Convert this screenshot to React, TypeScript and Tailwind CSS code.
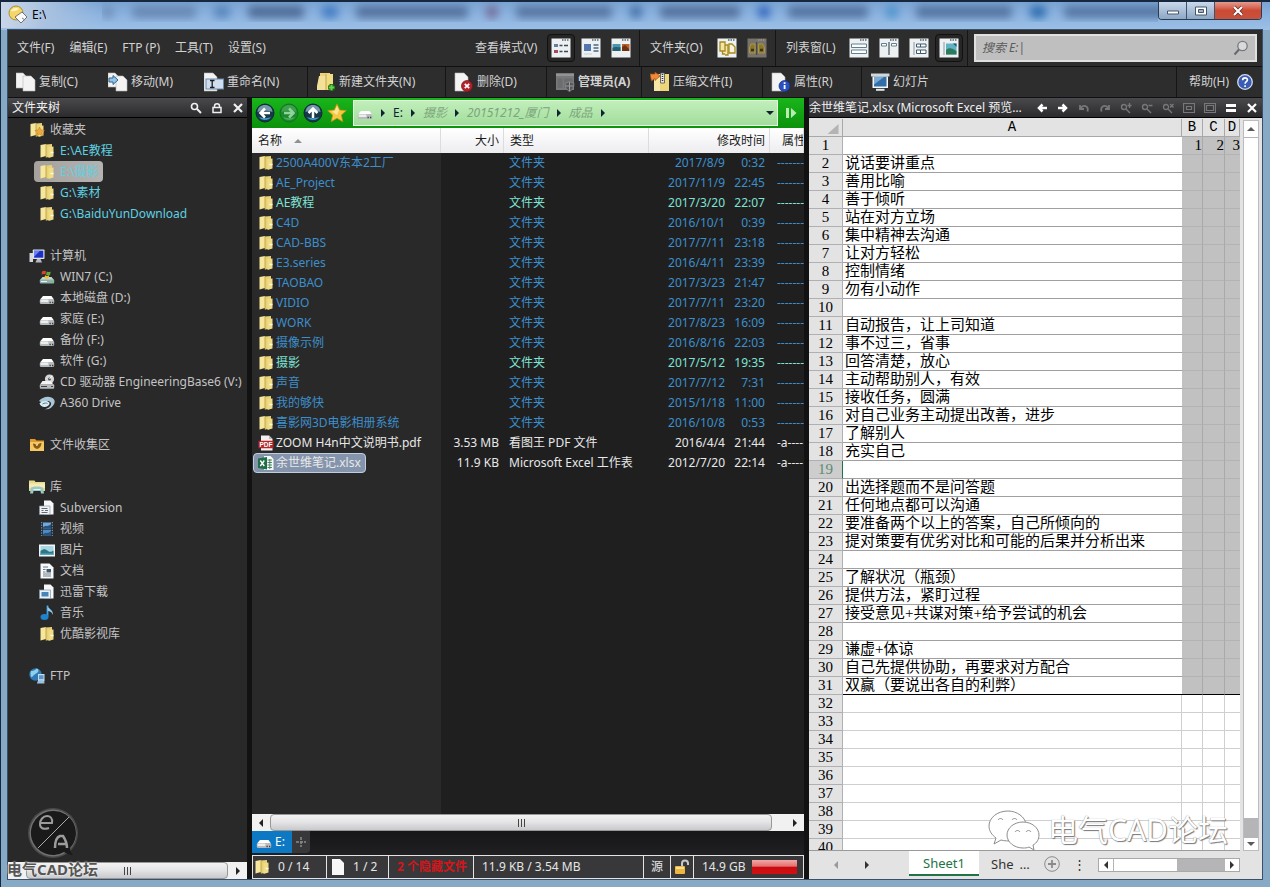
import React from "react";
import type { ReactNode } from "react";

const UI_FONT = "font-['Noto_Sans','Noto_Sans_CJK_SC',sans-serif]";

/* ---------- icons ---------- */

type SvgProps = { children: ReactNode; box?: string; className?: string };
const Svg = ({ children, box = "0 0 16 16", className = "size-4" }: SvgProps) => (
  <svg viewBox={box} className={`${className} shrink-0`} aria-hidden="true" fill="none">
    {children}
  </svg>
);

const Page = ({ x = 0, y = 0, w = 10, h = 14 }: { x?: number; y?: number; w?: number; h?: number }) => (
  <path d={`M${x} ${y}h${w - 4}l4 4v${h - 4}h${-w}z`} fill="#f3f3f3" stroke="#b9b9b9" strokeWidth="0.6" />
);

const FolderShape = () => (
  <>
    <path d="M1.500 2 7 1v12l-5.500 1.500z" fill="#f6e79c" />
    <path d="M7 1.500 13 1v12.500L7 14.500z" fill="#e8d277" />
    <path d="M9.500 4 14.500 3.500v10L9.500 15z" fill="#f0dc85" />
    <path d="M7 1v13.500" stroke="#b89a42" strokeWidth="0.8" />
    <path d="M11.500 9.500h3" stroke="#fffbe0" strokeWidth="1.500" />
  </>
);

const FolderIcon = () => (
  <Svg>
    <FolderShape />
  </Svg>
);

const FavIcon = () => (
  <Svg>
    <FolderShape />
    <path d="m10.500 5 1.500 3 3.500.400-2.600 2.200.800 3.400-3.200-1.900L7.400 14l.800-3.400L6 8.400 9.200 8z" fill="#f2a93b" stroke="#b87518" strokeWidth="0.500" />
  </Svg>
);

const DriveIcon = ({ className = "size-4" }: { className?: string }) => (
  <Svg className={className}>
    <path d="M4 6h8.500L15 9.500H1z" fill="#ffffff" />
    <rect x="0.800" y="9" width="14.400" height="5" rx="1.500" fill="#b9bcbe" />
    <rect x="1.500" y="9.500" width="8" height="2.500" rx="1" fill="#eceeee" />
    <path d="M10.500 12.500h1.300M13 12.500h1.300" stroke="#3a3f42" strokeWidth="1.400" />
  </Svg>
);

const WinDriveIcon = () => (
  <Svg>
    <path d="M3.500 8h9l2.500 3H1z" fill="#c8d6d4" />
    <rect x="0.800" y="10.500" width="14.400" height="4" rx="1" fill="#8fb0ac" />
    <path d="M2 12.500h6" stroke="#e8f3f0" />
    <path d="M3 2.500c1.500-1 2.500-1 4-.200L6.500 5.500C5 4.800 4 5 2.500 5.600z" fill="#d8452b" />
    <path d="M7.800 2.500c1.500.800 2.700.800 4 0L11 6c-1.500.700-2.500.500-4-.200z" fill="#63a83a" />
    <path d="M6 6.300c1.500.800 2.700.800 4.300 0l-.700 3c-1.500.700-2.600.600-4.200-.200z" fill="#efc02d" />
    <path d="M12.500 13h1.500" stroke="#4cd94a" strokeWidth="1.400" />
  </Svg>
);

const CdIcon = () => (
  <Svg>
    <circle cx="10.500" cy="5" r="4.600" fill="#d4d6d8" />
    <circle cx="10.500" cy="5" r="1.500" fill="#55595c" />
    <path d="m10.500 5 3-3.300" stroke="#ffffff" />
    <path d="M3.500 7h8l3 3.500H1z" fill="#f4f4f4" />
    <rect x="0.800" y="10.300" width="14.400" height="4.500" rx="1" fill="#b8babc" />
    <path d="M2 12.500h6M12 12.500h2" stroke="#3d4144" strokeWidth="1.200" />
  </Svg>
);

const A360Icon = () => (
  <Svg>
    <path d="M0 6C3 1.500 12 0 15 4.500c2 3-.500 7-5 9.500l-5 .500c5-1 8.500-5 6.500-7.300-1.800-2-6.500-1.200-7.500 1z" fill="#a9c6d6" />
    <path d="M.500 8.500c3-3 7.500-3 9.500-1.300 1.500 1.600-.500 3.800-3 4.500C4 12.500 1.500 11 .500 8.500z" fill="#dcecf3" />
    <path d="M3.500 9c2-1.200 4-1.200 5-.400" stroke="#4f7c94" />
  </Svg>
);

const ComputerIcon = () => (
  <Svg>
    <rect x="0.500" y="5" width="3.500" height="9" fill="#d5d8dc" />
    <rect x="3.800" y="1.500" width="11.700" height="9.500" rx="0.800" fill="#dfe3ea" />
    <rect x="5" y="2.700" width="9.300" height="7" fill="#1d2fc4" />
    <path d="m5 2.700 6 0L5 9z" fill="#6c82f0" />
    <path d="M8 11h3.500l1.500 3.500H6.500z" fill="#b5bac2" />
  </Svg>
);

const CollectIcon = () => (
  <Svg>
    <path d="M1 2h5l1.500 1.500H15V14H1z" fill="#e29b2f" />
    <path d="M1 5h14v9H1z" fill="#f6c765" />
    <path d="M4 6.500c2 0 3.500 1 4 2.500.500-1.500 2-3 4.500-3-.300 3-1.500 5.500-4.500 6C5.500 11.500 4 9.500 4 6.500z" fill="#8a5a12" />
    <path d="m7.500 9 1-1.500" stroke="#fff" strokeWidth="0.800" />
  </Svg>
);

const LibraryIcon = () => (
  <Svg>
    <path d="M0 1.500h5.500l1 1.500H16V12H0z" fill="#e7da8c" />
    <path d="M0 4.500h16V9H0z" fill="#f4ecb2" />
    <path d="M2 8.500c2-1.500 10-1.500 12 0l1 6h-3l-.500-2.500h-7L4 14.500H1z" fill="#9cc9c6" />
    <path d="M4.500 10.500h7" stroke="#e6f7f5" />
  </Svg>
);

const SubversionIcon = () => (
  <Svg>
    <path d="M5 .500h6.500l3 3v11H5z" fill="#f6f8fa" />
    <path d="M.500 6H11v8.500H.500z" fill="#f0f3f5" stroke="#8d9aa3" strokeWidth="0.700" />
    <path d="M2.500 8.500h6M2.500 10.500h2M6 10.500h3M2.500 12.500h6" stroke="#5d6c76" />
  </Svg>
);

const VideoIcon = () => (
  <Svg>
    <rect x="1.500" y="1" width="13" height="14" fill="#222c36" />
    <rect x="4" y="1.500" width="8" height="6" fill="#72a9d8" />
    <rect x="4" y="8.700" width="8" height="5.800" fill="#4a8cc7" />
    <path d="M4 6c3-2 5 0 8-3v4.500H4zM4 13c3-2 5 0 8-3v4.500H4z" fill="#28527c" />
    <path d="M2.700 1v14M13.300 1v14" stroke="#8fa2b2" strokeDasharray="1.300 1.300" />
  </Svg>
);

const ImageIcon = () => (
  <Svg>
    <rect x="0" y="2.500" width="16" height="12" fill="#f2f5f6" />
    <rect x="1.500" y="4" width="13" height="9" fill="#a8d6e4" />
    <path d="M1.500 9c3-2.500 5-2 7.500 0s4.500 0 5.500-.500V13h-13z" fill="#2c7687" />
    <path d="M1.500 11.500h13V13h-13z" fill="#5fa7bb" />
  </Svg>
);

const DocIcon = () => (
  <Svg>
    <path d="M1.500.500h9l4 4v11h-13z" fill="#f7f9fa" />
    <path d="M4 4h5M4 6.500h2.500M4 9h2.500M4 11h8M4 13h8" stroke="#6c7a84" />
    <rect x="7.500" y="6" width="4.500" height="3.500" fill="#3d5c6e" />
  </Svg>
);

const DownloadIcon = () => (
  <Svg>
    <path d="M5 .500h6.500l3 3v11H5z" fill="#f6f8fa" />
    <rect x="0.500" y="6" width="11" height="8.500" fill="#e8f1f8" stroke="#7f95a4" strokeWidth="0.700" />
    <rect x="2.500" y="8" width="7" height="4.500" fill="#4785b8" />
  </Svg>
);

const MusicIcon = () => (
  <Svg>
    <path d="M8.500.500v11" stroke="#3fa0e0" strokeWidth="1.800" />
    <path d="M8.500.500c.500 3.500 6 4 5.500 9.500-1-2.500-3-4-5.500-4.300z" fill="#8accf2" />
    <ellipse cx="5.500" cy="12" rx="4" ry="3" fill="#1f82cc" />
  </Svg>
);

const FtpIcon = () => (
  <Svg>
    <circle cx="6.500" cy="6.500" r="6.200" fill="#2f79b5" />
    <path d="M2 3c2 .500 4.500-1 5.500-2.500 3 .500 2 3.500.500 4.500S4 7.500 3 9 1 5 2 3z" fill="#8fd0e8" />
    <path d="M9 6h6.500v7.500H9z" fill="#c6dcef" />
    <path d="M10 7.200h4.500v4H10z" fill="#5a94cc" />
    <path d="M8 15.500c0-2 1.500-3.500 4-3.500s3.500 1.500 3.500 3.500z" fill="#9fc0dc" />
  </Svg>
);

const PdfIcon = () => (
  <Svg>
    <path d="M3 .500h8L14.500 4v11.500H3z" fill="#f4f0f0" />
    <path d="M11 .500V4h3.500z" fill="#bdb5b5" />
    <rect x="0.500" y="5.800" width="15" height="7.400" rx="0.500" fill="#b5262b" />
    <text x="8" y="12" textAnchor="middle" fontSize="6.500" fontWeight="700" fill="#fff" fontFamily="Liberation Sans, sans-serif">PDF</text>
  </Svg>
);

const XlsIcon = () => (
  <Svg>
    <path d="M6 1h6.500L15.500 4v11H6z" fill="#f5f8f6" />
    <path d="M9.500 5h4.500M9.500 7.500h4.500M9.500 10h4.500M9.500 12.500h4.500M11.800 4v10" stroke="#3c7a5a" strokeWidth="0.900" />
    <path d="M0 3.500 9 2v12.500L0 13z" fill="#1f6e45" />
    <path d="m2.300 5.500 4 5.500M6.300 5.500l-4 5.500" stroke="#fff" strokeWidth="1.400" />
  </Svg>
);

const T = "size-5";
const B20 = "0 0 20 20";

const CopyIcon = () => (
  <Svg box={B20} className={T}>
    <Page x={0} y={1} w={11} h={15} />
    <Page x={7} y={4} w={12} h={15} />
  </Svg>
);
const MoveIcon = () => (
  <Svg box={B20} className={T}>
    <Page x={0} y={1} w={11} h={14} />
    <Page x={8} y={4} w={11} h={15} />
    <path d="M1 6h4V3.500L10 8l-5 4.500V10H1z" fill="#8fc3ea" stroke="#275a86" strokeWidth="0.900" />
  </Svg>
);
const RenameIcon = () => (
  <Svg box={B20} className={T}>
    <Page x={0} y={1} w={13} h={18} />
    <rect x="2" y="7" width="17.500" height="10" fill="#cfdff0" stroke="#6c88a8" />
    <path d="M6 8.500h4.500M8.200 8.500v7M6 15.500h4.500" stroke="#1c1c1c" strokeWidth="1.300" />
  </Svg>
);
const NewFolderIcon = () => (
  <Svg box={B20} className={T}>
    <path d="M4 1h10v15H4z" fill="#e9d47b" />
    <path d="M3 4h7v14H1v-4z" fill="#f3e199" />
    <path d="M10 2h7v16h-7z" fill="#f0dc85" />
    <path d="M10 2v16" stroke="#c2a54d" />
    <path d="M15.500 12v7M12 15.500h7" stroke="#1c6a12" strokeWidth="4" />
    <path d="M15.500 12.700v5.600M12.700 15.500h5.600" stroke="#62d44a" strokeWidth="2" />
  </Svg>
);
const DeleteIcon = () => (
  <Svg box={B20} className={T}>
    <Page x={1} y={1} w={13} h={18} />
    <circle cx="13" cy="14" r="5.500" fill="#b3222a" stroke="#741016" strokeWidth="0.700" />
    <path d="m10.800 11.800 4.400 4.400M15.200 11.800l-4.400 4.400" stroke="#fff" strokeWidth="1.700" />
  </Svg>
);
const AdminIcon = () => (
  <Svg box={B20} className={T}>
    <rect x="1" y="1" width="18" height="17" fill="#77797b" />
    <path d="M1 3h18" stroke="#9a9c9e" strokeWidth="1.500" />
    <path d="M2.500 6.500h5v9.500h-5zM9 6.500h8.500V16H9z" fill="#6b6d6f" />
    <path d="m10 11.500 4.500-2 4.500 2c0 4-1.500 6.500-4.500 8-3-1.500-4.500-4-4.500-8z" fill="#55575a" stroke="#8c8e90" strokeWidth="0.800" />
    <path d="M14.500 10v4h4M14.500 19v-5h-4" stroke="#9a9c9e" />
  </Svg>
);
const ZipIcon = () => (
  <Svg box={B20} className={T}>
    <path d="M4 2h15v17H4z" fill="#eed67b" />
    <path d="M4 6h6v13H4z" fill="#f7e6a4" />
    <path d="M10.500 1h4v10h-4z" fill="#e8e8e8" stroke="#4e4e4e" strokeWidth="0.800" />
    <path d="M12.500 2v8" stroke="#333" strokeDasharray="1 1" strokeWidth="1.500" />
    <path d="m0 2 5 0V0l5 4-5 4.500V6.500L1.500 9z" fill="#ef8a3c" stroke="#a04c10" strokeWidth="0.700" />
  </Svg>
);
const PropIcon = () => (
  <Svg box={B20} className={T}>
    <Page x={1} y={1} w={13} h={18} />
    <circle cx="13.500" cy="14" r="5.500" fill="#2a50c0" stroke="#162c7e" strokeWidth="0.700" />
    <path d="M13.600 13v4M13.600 10.300v1.600" stroke="#fff" strokeWidth="1.800" />
  </Svg>
);
const SlideIcon = () => (
  <Svg box={B20} className={T}>
    <path d="M1 1.500h18.500v3H1z" fill="#ced6de" />
    <path d="M2.500 4.500H18V16H2.500z" fill="#f4f6f8" />
    <path d="M4 5h12.500v9.500H4z" fill="#336da8" />
    <path d="m4 5 10 0L4 12.500z" fill="#7aaad6" />
    <path d="M6 17.800h8.500" stroke="#dfe6ec" strokeWidth="2" />
  </Svg>
);
const HelpIcon = () => (
  <Svg>
    <circle cx="8" cy="8" r="7.300" fill="#3a5cb4" stroke="#d5dcec" strokeWidth="1.300" />
    <path d="M5.600 6.200C5.600 3 10.600 3.200 10.400 6c-.100 1.700-2.300 1.700-2.300 3.700M8.100 11.200v1.700" stroke="#fff" strokeWidth="1.600" />
  </Svg>
);

const Win = ({ children, dim = false }: { children: ReactNode; dim?: boolean }) => (
  <Svg box={B20} className={T}>
    <rect x="0.500" y="0.500" width="19" height="19" fill={dim ? "#77736a" : "#eef1f2"} />
    <path d="M11 2h7" stroke={dim ? "#9c988c" : "#56636c"} strokeDasharray="1.500 1" strokeWidth="1.500" />
    {children}
  </Svg>
);
const ListView = () => (
  <Win>
    <path d="M3 6h4v3H3z" fill="#64809e" />
    <path d="M3 12h4v3H3z" fill="#a84a5c" />
    <path d="M8.500 7.500h3M13 7.500h4M8.500 13.500h3M13 13.500h4" stroke="#3c4a58" strokeWidth="1.400" />
  </Win>
);
const DetailView = () => (
  <Win>
    <rect x="3" y="6" width="7" height="7" fill="#5577b0" />
    <path d="M12.500 7h5M12.500 10h5M12.500 13h5" stroke="#4a6684" strokeWidth="1.400" />
    <path d="M3 16h8" stroke="#c5cdd4" />
  </Win>
);
const ThumbView = () => (
  <Win>
    <rect x="1.500" y="6" width="8" height="7" fill="#4a96ac" />
    <path d="M1.500 10c3-2 5 0 8-1v4h-8z" fill="#27606f" />
    <rect x="11" y="6" width="7.500" height="7" fill="#b8602c" />
    <path d="m11 9 3-2 4 4v2h-7z" fill="#6e3214" />
  </Win>
);
const FolderSync = () => (
  <Win>
    <path d="M3 4h5v9H3zM5.500 13v3H8M8 7h3v10H8" stroke="#a6891f" strokeWidth="1.300" fill="#f1e6a6" />
    <path d="M12 6h3l3 3v6h-6z" stroke="#a6891f" strokeWidth="1.300" fill="#f8f4dc" />
  </Win>
);
const FolderFind = () => (
  <Win dim>
    <path d="M2.500 15v-5L4 6h4v9zM11.500 15V6h4l2 4v5z" fill="#8b7727" stroke="#c2ab52" strokeWidth="0.600" />
    <path d="M9.700 4v13" stroke="#423f35" />
    <path d="M4 12h3M13 12h3" stroke="#383425" strokeWidth="2.500" />
  </Win>
);
const PaneRows = () => (
  <Win>
    <path d="M2.500 6h15v3.500h-15zM2.500 12h15v3.500h-15z" fill="#fff" stroke="#61808f" />
  </Win>
);
const PaneSplit = () => (
  <Win>
    <path d="M2.500 5.500h5v2.500h-5zM12.500 5.500h5v2.500h-5z" fill="#fff" stroke="#61808f" />
    <path d="M10 4v13" stroke="#41525c" strokeWidth="1.200" />
  </Win>
);
const PaneTree = () => (
  <Win>
    <path d="M5 4v13" stroke="#8898a4" />
    <path d="M7.500 6h4v3h-4zM11.500 6h5.500v3h-5.500zM7.500 12h4v3.500h-4zM11.500 12h5.500v3.500h-5.500z" fill="#fff" stroke="#41586a" />
  </Win>
);
const PanePreview = () => (
  <Win>
    <path d="M5 4v13" stroke="#8898a4" />
    <rect x="7" y="5.500" width="10.500" height="11" fill="#5fb3c4" />
    <path d="M7 12c3-3 6-2 10.500 1v3.500H7z" fill="#2c7a5e" />
    <path d="M14 5.500 17.500 9v-3.500z" fill="#235a6c" />
  </Win>
);

const SearchGlyph = ({ className = "size-3" }: { className?: string }) => (
  <Svg box="0 0 12 12" className={className}>
    <circle cx="4.500" cy="4.500" r="3" stroke="currentColor" strokeWidth="1.600" />
    <path d="M7 7l4 4" stroke="currentColor" strokeWidth="2" />
  </Svg>
);
const LockGlyph = () => (
  <Svg box="0 0 12 12" className="size-3">
    <path d="M3.500 5.500V4c0-3 5-3 5 0v1.500M2 5.500h8v5H2z" stroke="currentColor" strokeWidth="1.500" />
  </Svg>
);
const CloseGlyph = () => (
  <Svg box="0 0 12 12" className="size-3">
    <path d="m2 2 8 8M10 2l-8 8" stroke="currentColor" strokeWidth="2.200" />
  </Svg>
);

const Orb = ({ d, faded = false }: { d: string; faded?: boolean }) => (
  <Svg box={B20} className={T}>
    <circle cx="10" cy="10" r="9" fill={faded ? "#1b8a2e" : "#173848"} stroke={faded ? "#117321" : "#0c2b38"} />
    <path d="M2.500 9C3 4 6 2 10 2s7 2 7.500 7c-4-1.800-11-1.800-15 0z" fill={faded ? "#49a457" : "#8fb2c6"} opacity="0.800" />
    <path d="M4 14c2 4 10 4 12 0-3 1.500-9 1.500-12 0z" fill={faded ? "#4cae5a" : "#3f9cc4"} />
    <path d={d} stroke={faded ? "#8fd49a" : "#fff"} strokeWidth="2.500" strokeLinejoin="miter" />
  </Svg>
);

const StarIcon = () => (
  <Svg box={B20} className={T}>
    <path d="m10 .800 2.800 6.100 6.600.600-5 4.500 1.400 6.700L10 15.300l-5.800 3.400 1.400-6.700-5-4.500 6.600-.600z" fill="#f5c842" stroke="#c48a14" strokeWidth="0.700" />
    <path d="m10 3 2 4.600L10 12 5 8.500l3-.900z" fill="#fbe597" />
  </Svg>
);

const AppIcon = () => (
  <Svg box={B20} className={T}>
    <circle cx="8" cy="8" r="7" fill="#f4d768" stroke="#9a7d20" strokeWidth="0.800" />
    <path d="M3 6c1-3 6-4 8-2-2 1-5 3-8 2z" fill="#fff6c4" />
    <path d="m7 12 7-5 5 5-6 6z" fill="#fafafa" stroke="#555" strokeWidth="0.800" />
    <path d="m14 13 3 2" stroke="#777" />
  </Svg>
);

/* ---------- shared pieces ---------- */

const Tri = ({ dir, className = "" }: { dir: "l" | "r" | "u" | "d"; className?: string }) => {
  const d = { l: "M6 0v8L2 4z", r: "M2 0v8l4-4z", u: "M0 6h8L4 2z", d: "M0 2h8L4 6z" }[dir];
  return (
    <svg viewBox="0 0 8 8" className={`size-2 shrink-0 ${className}`} aria-hidden="true">
      <path d={d} fill="currentColor" />
    </svg>
  );
};

const HScroll = ({ label, rest }: { label: string; rest: string }) => (
  <div className="flex h-[17px] shrink-0 items-stretch bg-[#f1f1f1] text-[#222]">
    <button aria-label={`${label}向左`} className="flex w-[18px] items-center justify-center">
      <Tri dir="l" />
    </button>
    <div className={`flex flex-1 ${rest}`}>
      <div className="flex flex-1 items-center justify-center gap-px rounded-sm border border-[#979797] bg-linear-to-b from-[#f3f3f3] via-[#e3e3e5] to-[#c9c9cc]">
        <i className="h-2 w-px bg-[#444]" />
        <i className="ml-px h-2 w-px bg-[#444]" />
        <i className="ml-px h-2 w-px bg-[#444]" />
      </div>
    </div>
    <button aria-label={`${label}向右`} className="flex w-[18px] items-center justify-center">
      <Tri dir="r" />
    </button>
  </div>
);

/* ---------- window chrome ---------- */

const GHOSTS = [
  "w-3 bg-[#6c8bb2]",
  "w-16 bg-[#5f7fa8]",
  "w-4 bg-[#4d7cb4]",
  "w-14 bg-[#3f5a84]",
  "w-4 bg-[#3170bd]",
  "w-28 bg-[#46628c]",
  "w-3 bg-[#6f5c86]",
  "w-24 bg-[#4a6792]",
  "w-3 bg-[#36619a]",
  "w-20 bg-[#45628b]",
  "w-3 bg-[#1f55b4]",
  "w-20 bg-[#466490]",
  "w-3 bg-[#3f8cc8]",
  "w-24 bg-[#466590]",
  "w-4 bg-[#165da2]",
  "w-28 bg-[#486994]",
  "w-4 bg-[#b8465e]",
  "w-20 bg-[#4a6c96]",
];

const TitleBar = () => (
  <header className="flex h-7 shrink-0 items-start bg-linear-to-b from-[#7ba3d3] via-[#8db4e0] to-[#9cc0e6]">
    <div className="flex h-[26px] items-center gap-1 bg-linear-to-r from-[#c9d6e8] to-[#a9c2e0] pl-[7px]">
      <AppIcon />
      <span className="text-black">E:\</span>
    </div>
    <div className="h-[26px] w-14 shrink-0 bg-linear-to-r from-[#a9c2e0] to-transparent" />
    <div className="flex min-w-0 flex-1 items-center gap-[18px] overflow-hidden py-1" aria-hidden="true">
      {GHOSTS.map((g, i) => (
        <span key={i} className={`h-3 shrink-0 rounded-sm opacity-80 blur-[4px] ${g}`} />
      ))}
    </div>
    <div className="mr-2 flex h-[18px] shrink-0 overflow-hidden rounded-b border border-t-0 border-[#2c3c50]">
      <button aria-label="最小化" className="flex w-7 items-center justify-center border-r border-[#40526a] bg-linear-to-b from-[#c9d8ea] to-[#8da7c6]">
        <svg viewBox="0 0 14 10" className="h-2.5 w-3.5"><path d="M1.500 5h11v3h-11z" fill="#fff" stroke="#46566a" /></svg>
      </button>
      <button aria-label="最大化" className="flex w-7 items-center justify-center border-r border-[#40526a] bg-linear-to-b from-[#c9d8ea] to-[#8da7c6]">
        <svg viewBox="0 0 14 10" className="h-2.5 w-3.5"><path d="M1.500 1h11v8h-11z" fill="#fff" stroke="#46566a" /><path d="M4.500 3.500h5v3h-5z" fill="#9db4d0" stroke="#46566a" /></svg>
      </button>
      <button aria-label="关闭" className="flex w-[46px] items-center justify-center bg-linear-to-b from-[#e59a8c] via-[#cc4a35] to-[#c8523c]">
        <svg viewBox="0 0 14 12" className="h-3 w-3.5"><path d="m3 2 8 8M11 2l-8 8" stroke="#5a2a28" strokeWidth="3.500" /><path d="m3 2 8 8M11 2l-8 8" stroke="#fff" strokeWidth="2.200" /></svg>
      </button>
    </div>
  </header>
);

type IconBtn = { label: string; icon: ReactNode; on?: boolean };
const ModeGroup = ({ title, items, width }: { title: string; items: IconBtn[]; width: string }) => (
  <div className={`flex shrink-0 items-center justify-between border-r border-[#151516] pl-[10px] pr-1 ${width}`}>
    <button className="whitespace-nowrap">{title}</button>
    <div className="flex gap-0.5">
      {items.map((b) => (
        <button
          key={b.label}
          aria-label={b.label}
          aria-pressed={!!b.on}
          className={`flex size-7 items-center justify-center rounded-sm border ${b.on ? "border-[#111112] bg-[#262627]" : "border-transparent"}`}
        >
          {b.icon}
        </button>
      ))}
    </div>
  </div>
);

const MenuBar = () => (
  <div className="flex h-9 shrink-0 items-stretch bg-[#2d2d2e]">
    <nav className="flex items-center gap-[15px] pl-[9px]">
      {["文件(F)", "编辑(E)", "FTP (P)", "工具(T)", "设置(S)"].map((m) => (
        <button key={m} className="whitespace-nowrap">{m}</button>
      ))}
    </nav>
    <div className="ml-auto flex items-stretch">
      <ModeGroup
        title="查看模式(V)"
        width="w-[175px]"
        items={[
          { label: "列表", icon: <ListView />, on: true },
          { label: "详细信息", icon: <DetailView /> },
          { label: "缩略图", icon: <ThumbView /> },
        ]}
      />
      <ModeGroup
        title="文件夹(O)"
        width="w-[136px]"
        items={[
          { label: "同步文件夹", icon: <FolderSync /> },
          { label: "查找文件夹", icon: <FolderFind /> },
        ]}
      />
      <ModeGroup
        title="列表窗(L)"
        width="w-[192px]"
        items={[
          { label: "单窗格", icon: <PaneRows /> },
          { label: "双窗格", icon: <PaneSplit /> },
          { label: "文件夹树", icon: <PaneTree /> },
          { label: "预览窗格", icon: <PanePreview />, on: true },
        ]}
      />
      <label className="my-1 ml-1.5 mr-[5px] flex w-[283px] items-center border-2 border-[#e0e0e0] bg-[#bfbfc0] px-1.5 text-[#555]">
        <input aria-label="搜索" placeholder="搜索 E:|" className="min-w-0 flex-1 bg-transparent italic outline-none placeholder:text-[#5c5c5c]" />
        <svg viewBox="0 0 16 16" className="size-4" fill="none" aria-hidden="true">
          <circle cx="9.500" cy="6" r="4.700" stroke="#77797c" strokeWidth="1.300" fill="#d8dadc" />
          <path d="m6 9.500-4.500 5" stroke="#66686b" strokeWidth="2" />
        </svg>
      </label>
    </div>
  </div>
);

const TOOLS: { label: string; icon: ReactNode; cls: string }[] = [
  { label: "复制(C)", icon: <CopyIcon />, cls: "w-[92px] border-l-0" },
  { label: "移动(M)", icon: <MoveIcon />, cls: "w-[96px] border-l-0" },
  { label: "重命名(N)", icon: <RenameIcon />, cls: "w-[111px] border-l-0" },
  { label: "新建文件夹(N)", icon: <NewFolderIcon />, cls: "w-[138px] border-l" },
  { label: "删除(D)", icon: <DeleteIcon />, cls: "w-[101px] border-l" },
  { label: "管理员(A)", icon: <AdminIcon />, cls: "w-[95px] border-l font-bold" },
  { label: "压缩文件(I)", icon: <ZipIcon />, cls: "w-[121px] border-l" },
  { label: "属性(R)", icon: <PropIcon />, cls: "w-[99px] border-l" },
  { label: "幻灯片", icon: <SlideIcon />, cls: "w-[90px] border-l" },
];

const ToolBar = () => (
  <div className="flex h-8 shrink-0 items-stretch border-y border-[#101011] bg-[#2d2d2e]">
    {TOOLS.map((t) => (
      <button key={t.label} className={`flex items-center gap-[3px] whitespace-nowrap border-[#151516] pl-2 ${t.cls}`}>
        {t.icon}
        {t.label}
      </button>
    ))}
    <button className="ml-auto flex items-center gap-2 border-l border-[#151516] pl-3 pr-[9px]">
      帮助(H)
      <HelpIcon />
    </button>
  </div>
);

/* ---------- folder tree ---------- */

type Node = { text: string; icon: ReactNode; child?: boolean; hot?: boolean; sel?: boolean } | null;
const TREE: Node[] = [
  { text: "收藏夹", icon: <FavIcon /> },
  { text: "E:\\AE教程", icon: <FolderIcon />, child: true, hot: true },
  { text: "E:\\摄影", icon: <FolderIcon />, child: true, hot: true, sel: true },
  { text: "G:\\素材", icon: <FolderIcon />, child: true, hot: true },
  { text: "G:\\BaiduYunDownload", icon: <FolderIcon />, child: true, hot: true },
  null,
  { text: "计算机", icon: <ComputerIcon /> },
  { text: "WIN7 (C:)", icon: <WinDriveIcon />, child: true },
  { text: "本地磁盘 (D:)", icon: <DriveIcon />, child: true },
  { text: "家庭 (E:)", icon: <DriveIcon />, child: true },
  { text: "备份 (F:)", icon: <DriveIcon />, child: true },
  { text: "软件 (G:)", icon: <DriveIcon />, child: true },
  { text: "CD 驱动器 EngineeringBase6 (V:)", icon: <CdIcon />, child: true },
  { text: "A360 Drive", icon: <A360Icon />, child: true },
  null,
  { text: "文件收集区", icon: <CollectIcon /> },
  null,
  { text: "库", icon: <LibraryIcon /> },
  { text: "Subversion", icon: <SubversionIcon />, child: true },
  { text: "视频", icon: <VideoIcon />, child: true },
  { text: "图片", icon: <ImageIcon />, child: true },
  { text: "文档", icon: <DocIcon />, child: true },
  { text: "迅雷下载", icon: <DownloadIcon />, child: true },
  { text: "音乐", icon: <MusicIcon />, child: true },
  { text: "优酷影视库", icon: <FolderIcon />, child: true },
  null,
  { text: "FTP", icon: <FtpIcon /> },
];

const PANEL_HEAD = "flex h-5 shrink-0 items-center border-b border-black bg-linear-to-b from-[#4a4a4e] to-[#2b2b2d] text-[#f0f0f0]";

const TreePanel = () => (
  <aside className="flex min-h-0 flex-col bg-[#29292a]">
    <div className={`${PANEL_HEAD} pl-1`}>
      <h2 className="flex-1">文件夹树</h2>
      <div className="flex gap-[9px] pr-[3px]">
        <button aria-label="搜索文件夹"><SearchGlyph /></button>
        <button aria-label="锁定"><LockGlyph /></button>
        <button aria-label="关闭文件夹树"><CloseGlyph /></button>
      </div>
    </div>
    <ul className="min-h-0 flex-1 overflow-hidden pt-px">
      {TREE.map((n, i) =>
        n === null ? (
          <li key={i} className="h-[21px]" />
        ) : (
          <li key={i} className={n.child ? "flex h-[21px] pl-[26px]" : "flex h-[21px] pl-4"}>
            <button
              className={`flex items-center gap-[5px] whitespace-nowrap rounded-sm px-[5px] ${n.hot ? "text-[#5fd0e0]" : "text-[#c4c4c4]"} ${n.sel ? "bg-linear-to-r from-[#a5a19c] to-[#b3b3b3]" : ""}`}
            >
              {n.icon}
              {n.text}
            </button>
          </li>
        ),
      )}
    </ul>
    <HScroll label="文件夹树" rest="pr-px" />
  </aside>
);

/* ---------- file list ---------- */

type FileRow = { name: string; date: string; time: string; hot?: boolean; size?: string; type?: string; icon?: ReactNode; sel?: boolean };
const FILES: FileRow[] = [
  { name: "2500A400V东本2工厂", date: "2017/8/9", time: "0:32" },
  { name: "AE_Project", date: "2017/11/9", time: "22:45" },
  { name: "AE教程", date: "2017/3/20", time: "22:07", hot: true },
  { name: "C4D", date: "2016/10/1", time: "0:39" },
  { name: "CAD-BBS", date: "2017/7/11", time: "23:18" },
  { name: "E3.series", date: "2016/4/11", time: "23:39" },
  { name: "TAOBAO", date: "2017/3/23", time: "21:47" },
  { name: "VIDIO", date: "2017/7/11", time: "23:20" },
  { name: "WORK", date: "2017/8/23", time: "16:09" },
  { name: "摄像示例", date: "2016/8/16", time: "22:03" },
  { name: "摄影", date: "2017/5/12", time: "19:35", hot: true },
  { name: "声音", date: "2017/7/12", time: "7:31" },
  { name: "我的够快", date: "2015/1/18", time: "11:00" },
  { name: "喜影网3D电影相册系统", date: "2016/10/8", time: "0:53" },
  { name: "ZOOM H4n中文说明书.pdf", date: "2016/4/4", time: "21:44", size: "3.53 MB", type: "看图王 PDF 文件", icon: <PdfIcon /> },
  { name: "余世维笔记.xlsx", date: "2012/7/20", time: "22:14", size: "11.9 KB", type: "Microsoft Excel 工作表", icon: <XlsIcon />, sel: true },
];

const rowColor = (f: FileRow) => (f.type ? "text-[#e8e8e8]" : f.hot ? "text-[#7fe3d4]" : "text-[#3d8fcb]");

const Crumb = ({ children }: { children: ReactNode }) => (
  <button className="italic text-[#7da47b]">{children}</button>
);

const FilePanel = () => (
  <main className="flex min-h-0 min-w-0 flex-col bg-[#1f1f20]">
    <div className="flex h-[30px] shrink-0 items-center bg-linear-to-b from-[#19b51b] to-[#0b920c]">
      <div className="flex items-center gap-1 pl-[3px] pr-1.5">
        <button aria-label="后退"><Orb d="M15 10H6M10 5.500 5.500 10l4.500 4.500" /></button>
        <button aria-label="前进"><Orb faded d="M5 10h9M10 5.500l4.500 4.500-4.500 4.500" /></button>
        <button aria-label="向上"><Orb d="M10 15V6M5.500 10 10 5.500l4.500 4.500" /></button>
        <button aria-label="收藏"><StarIcon /></button>
      </div>
      <div className="flex h-[26px] min-w-0 flex-1 items-center gap-1.5 overflow-hidden whitespace-nowrap border border-[#e8f8e4] bg-linear-to-b from-[#c1efbb] to-[#a2dd9c] px-[3px] text-[#123]">
        <DriveIcon />
        <Tri dir="r" />
        <button>E:</button>
        <Tri dir="r" />
        <Crumb>摄影</Crumb>
        <Tri dir="r" />
        <Crumb>20151212_厦门</Crumb>
        <Tri dir="r" />
        <Crumb>成品</Crumb>
        <Tri dir="r" />
        <button aria-label="展开路径" className="ml-auto"><Tri dir="d" /></button>
      </div>
      <button aria-label="转到" className="flex h-full w-[26px] items-center justify-center">
        <svg viewBox="0 0 12 12" className="size-3" aria-hidden="true"><path d="M1 1h3v10H1zM6 1l5.500 5L6 11z" fill="#b9ecb4" /></svg>
      </button>
    </div>
    <div className="min-h-0 flex-1 overflow-hidden bg-[linear-gradient(to_right,#29292a_189px,#1f1f20_189px)]">
      <table className="w-full table-fixed border-separate border-spacing-0 whitespace-nowrap">
        <colgroup>
          <col className="w-[189px]" />
          <col className="w-[63px]" />
          <col />
          <col className="w-[121px]" />
          <col className="w-[34px]" />
        </colgroup>
        <thead>
          <tr className="h-[25px] bg-linear-to-b from-white to-[#ededf0] text-[#1a1a1a] [&>th]:border-r [&>th]:border-[#dcdce0] [&>th]:py-0 [&>th]:font-normal">
            <th className="pl-1.5 text-left">
              <span className="flex items-center gap-3">名称 <Tri dir="u" className="text-[#909090]" /></span>
            </th>
            <th className="pr-1 text-right">大小</th>
            <th className="pl-[6px] text-left">类型</th>
            <th className="pr-1 text-right">修改时间</th>
            <th className="overflow-hidden pl-3 text-left">属性</th>
          </tr>
        </thead>
        <tbody>
          {FILES.map((f) => (
            <tr key={f.name} className={`h-5 ${rowColor(f)}`}>
              <td className="p-0 pl-px">
                <span
                  className={`inline-flex h-5 items-center gap-0.5 rounded-sm border px-1 align-top ${f.sel ? "border-[#c0cddf] bg-[#8494ad]" : "border-transparent"}`}
                >
                  {f.icon ?? <FolderIcon />}
                  {f.name}
                </span>
              </td>
              <td className="p-0 pr-[5px] text-right">{f.size}</td>
              <td className="p-0 pl-[5px]">{f.type ?? "文件夹"}</td>
              <td className="p-0 pr-[5px] text-right">
                {f.date}
                <span className="inline-block w-10">{f.time}</span>
              </td>
              <td className="overflow-hidden p-0 pl-[7px]">{f.type ? "-a----" : "---------"}</td>
            </tr>
          ))}
        </tbody>
      </table>
    </div>
    <HScroll label="文件列表" rest="pr-[14px]" />
    <div className="flex h-[24px] shrink-0 items-start bg-linear-to-b from-[#161618] to-[#202022]">
      <button className="flex h-[22px] items-center gap-[3px] bg-[#0d78c4] pl-1 pr-[7px] text-white"><DriveIcon />E:</button>
      <button aria-label="新建标签" className="flex h-[22px] w-[18px] items-center justify-center rounded-br bg-[#38383a] text-[#8a8a8c]">
        <svg viewBox="0 0 10 10" className="size-2.5" aria-hidden="true"><path d="M5 0v10M0 5h10" stroke="currentColor" strokeWidth="1.500" strokeDasharray="3 1" /></svg>
      </button>
    </div>
    <footer className="flex h-[24px] shrink-0 items-stretch whitespace-nowrap border border-[#e4e4e4] bg-[#38383a] text-[#e6e6e6] [&>div]:flex [&>div]:items-center [&>div]:border-r [&>div]:border-[#e4e4e4]">
      <div className="w-[74px] gap-2 pl-px"><FolderIcon />0 / 14</div>
      <div className="w-[62px] gap-2 pl-1">
        <svg viewBox="0 0 14 16" className="h-4 w-3.5 shrink-0" aria-hidden="true"><path d="M1 0h8l4 4v12H1z" fill="#f7f7f7" /></svg>
        1 / 2
      </div>
      <div className="w-[85px] pl-2 font-bold text-[#d4161a]">2 个隐藏文件</div>
      <div className="min-w-0 flex-1 overflow-hidden pl-2">11.9 KB / 3.54 MB</div>
      <div className="w-[27px] justify-center">源</div>
      <div className="w-[23px] justify-center">
        <Svg>
          <path d="M8 7V4.500C8 .500 14 .500 14 4.500V6" stroke="#c9c9c9" strokeWidth="2" />
          <rect x="1" y="7" width="10" height="8" rx="1" fill="#eeb63c" />
          <path d="M2 9h8" stroke="#fbe19a" strokeWidth="2" />
        </Svg>
      </div>
      <div className="w-[109px] justify-between !border-r-0 pl-2 pr-1.5">
        14.9 GB
        <span className="h-3.5 w-[45px] bg-[linear-gradient(to_bottom,#f2a7a7,#e47070_45%,#c80a0e_50%,#d01014)]" />
      </div>
    </footer>
  </main>
);

/* ---------- spreadsheet preview ---------- */

const NOTES: Record<number, string> = {
  2: "说话要讲重点", 3: "善用比喻", 4: "善于倾听", 5: "站在对方立场", 6: "集中精神去沟通",
  7: "让对方轻松", 8: "控制情绪", 9: "勿有小动作", 11: "自动报告，让上司知道", 12: "事不过三，省事",
  13: "回答清楚，放心", 14: "主动帮助别人，有效", 15: "接收任务，圆满", 16: "对自己业务主动提出改善，进步",
  17: "了解别人", 18: "充实自己", 20: "出选择题而不是问答题", 21: "任何地点都可以沟通",
  22: "要准备两个以上的答案，自己所倾向的", 23: "提对策要有优劣对比和可能的后果并分析出来",
  25: "了解状况（瓶颈）", 26: "提供方法，紧盯过程", 27: "接受意见+共谋对策+给予尝试的机会",
  29: "谦虚+体谅", 30: "自己先提供协助，再要求对方配合", 31: "双赢（要说出各自的利弊）",
};
const ROWS = Array.from({ length: 40 }, (_, i) => i + 1);

const cellLine = (r: number) => (r < 31 ? "border-[#a0a0a2]" : r === 31 ? "border-black" : "border-[#cfcfd1]");

const PREVIEW_BTNS: { label: string; icon: ReactNode; on?: boolean }[] = [
  { label: "上一个", on: true, icon: <path d="M11 6H3M6.500 2.500 3 6l3.500 3.500" strokeWidth="2.500" /> },
  { label: "下一个", on: true, icon: <path d="M1 6h8M5.500 2.500 9 6 5.500 9.500" strokeWidth="2.500" /> },
  { label: "左旋转", icon: <path d="M2 3v4h4M2.500 6.500C5 2 11 3.500 9.500 9.500" strokeWidth="1.800" /> },
  { label: "右旋转", icon: <path d="M10 3v4H6M9.500 6.500C7 2 1 3.500 2.500 9.500" strokeWidth="1.800" /> },
  { label: "放大", icon: <path d="M6.500 5a2.500 2.500 0 1 1-5 0 2.500 2.500 0 0 1 5 0zM6 7l4 4M9.500 1v5M7.500 3.500h4" strokeWidth="1.400" /> },
  { label: "缩小", icon: <path d="M6.500 5a2.500 2.500 0 1 1-5 0 2.500 2.500 0 0 1 5 0zM6 7l4 4M7.500 3.500h4" strokeWidth="1.400" /> },
  { label: "原始大小", icon: <path d="M6.500 5a2.500 2.500 0 1 1-5 0 2.500 2.500 0 0 1 5 0zM6 7l4 4M8 2l3.500 3.500M11.500 2 8 5.500" strokeWidth="1.300" /> },
  { label: "适合窗口", icon: <path d="M.500 1.500h11v9H.500zM3.500 4.500h5v3h-5z" strokeWidth="1.200" /> },
  { label: "填充窗口", icon: <path d="M.500 1.500h11v9H.500zM2.500 3.500h7v5h-7z" strokeWidth="1.200" /> },
  { label: "布局", on: true, icon: <path d="M1 3.500h10M1 8.500h10" strokeWidth="3" /> },
  { label: "关闭预览", on: true, icon: <path d="m2 2 8 8M10 2l-8 8" strokeWidth="2.200" /> },
];

const PreviewPanel = () => (
  <section className="flex min-h-0 min-w-0 flex-col bg-[#e3e3e4]">
    <div className={PANEL_HEAD}>
      <h2 className="min-w-0 flex-1 truncate">余世维笔记.xlsx (Microsoft Excel 预览程序)</h2>
      <div className="flex pl-1">
        {PREVIEW_BTNS.map((b) => (
          <button key={b.label} aria-label={b.label} className={`flex w-[21px] justify-center ${b.on ? "text-white" : "text-[#77777a]"}`}>
            <svg viewBox="0 0 12 12" className="size-3" fill="none" stroke="currentColor" aria-hidden="true">{b.icon}</svg>
          </button>
        ))}
      </div>
    </div>
    <div className="flex min-h-0 flex-1 pt-px">
      <div className="min-w-0 flex-1 overflow-hidden border-b border-[#9a9a9c] bg-white font-['Liberation_Serif','Noto_Sans_CJK_SC',serif] text-[15px] leading-[17px] text-black">
        <table className="w-full table-fixed border-separate border-spacing-0 whitespace-nowrap [&_td]:overflow-hidden [&_td]:border-b [&_td]:p-0 [&_th]:overflow-hidden [&_th]:border-b [&_th]:border-r [&_th]:p-0 [&_th]:font-normal">
          <colgroup>
            <col className="w-[34px]" />
            <col />
            <col className="w-[21px]" />
            <col className="w-[22px]" />
            <col className="w-[15px]" />
          </colgroup>
          <thead>
            <tr className="h-[18px] bg-[#e3e3e4] font-['Liberation_Mono',monospace] text-[14px] [&>th]:border-[#a8a8aa]">
              <th>
                <svg viewBox="0 0 32 16" className="h-4 w-full" aria-hidden="true"><path d="M29 4v10H18z" fill="#b4b4b6" /></svg>
              </th>
              <th>A</th>
              <th>B</th>
              <th>C</th>
              <th>D</th>
            </tr>
          </thead>
          <tbody>
            {ROWS.map((r) => (
              <tr key={r} className="h-[18px]">
                <th scope="row" className={r === 19 ? "border-b-[#b0b0b2] border-r-[#217346] bg-[#cdcdce] text-[#5c8a72]" : "border-[#b0b0b2] bg-[#e3e3e4]"}>{r}</th>
                <td className={`${cellLine(r)} ${r > 31 ? "border-r" : ""}`}>
                  <span className="block h-[17px] pl-0.5">{NOTES[r]}</span>
                </td>
                {[1, 2, 3].map((n) => (
                  <td
                    key={n}
                    className={`text-right ${n < 3 ? "border-r pr-[3px]" : ""} ${r <= 31 ? "bg-[#c1c1c2] border-r-[#a9a9ab]" : ""} ${r < 31 ? "border-b-[#b3b3b5]" : r === 31 ? "border-b-black" : "border-[#cfcfd1]"}`}
                  >
                    {r === 1 ? n : null}
                  </td>
                ))}
              </tr>
            ))}
          </tbody>
        </table>
      </div>
      <div className="mx-[3px] mt-px flex w-4 shrink-0 flex-col border border-[#bcbcbe] bg-[#b5b5b7] text-[#5a5a5c]">
        <button aria-label="向上滚动" className="flex h-4 items-center justify-center bg-white"><Tri dir="u" /></button>
        <div className="mt-px flex-1 bg-white" />
        <div className="h-5" />
        <button aria-label="向下滚动" className="flex h-3 items-center justify-center bg-white"><Tri dir="d" /></button>
      </div>
    </div>
    <div className="flex h-[28px] shrink-0 items-stretch pr-[22px] text-[13px] text-[#333]">
      <button aria-label="上一个工作表" className="flex w-[54px] items-center justify-center text-[#9a9a9a]"><Tri dir="l" /></button>
      <button aria-label="下一个工作表" className="flex items-center"><Tri dir="r" /></button>
      <button className="mb-[3px] ml-auto w-[70px] border-b-2 border-[#217346] bg-white text-[#217346]">Sheet1</button>
      <button className="mb-[3px] flex w-[57px] items-center gap-1.5 pl-3">
        <span>She</span>
        <span>…</span>
      </button>
      <button aria-label="新建工作表" className="mb-[3px] ml-2 flex items-center">
        <svg viewBox="0 0 16 16" className="size-4" fill="none" stroke="#8a8a8c" aria-hidden="true"><circle cx="8" cy="8" r="7.300" /><path d="M8 4v8M4 8h8" strokeWidth="1.800" /></svg>
      </button>
      <span className="mb-[3px] flex w-[38px] items-center justify-center">⋮</span>
      <div className="mt-[7px] flex h-[14px] w-[142px] border border-[#a9a9ab] bg-[#b5b5b7]">
        <button aria-label="工作表向左" className="flex w-3.5 items-center justify-center bg-white"><Tri dir="l" /></button>
        <div className="ml-px w-[63px] bg-white" />
        <button aria-label="工作表向右" className="ml-auto flex w-3.5 items-center justify-center bg-white"><Tri dir="r" /></button>
      </div>
    </div>
  </section>
);

/* ---------- watermarks ---------- */

const LogoMark = () => (
  <div className="pointer-events-none absolute bottom-[9px] left-[6px] flex flex-col text-[#555]">
    <svg viewBox="0 0 52 52" className="ml-5 size-[52px]" aria-hidden="true">
      <circle cx="26" cy="25" r="25" fill="#8a8a8a" opacity="0.350" />
      <circle cx="26" cy="25" r="23.500" fill="#a5a5a5" opacity="0.450" />
      <path d="M26 3a22 22 0 1 0 11 41c3 2 6 3 9 3-2-2-3-4-3-7A22 22 0 0 0 26 3z" fill="#1a1a1b" />
      <path d="M11 40 42 9" stroke="#aaa" />
      <path d="M14 15h11c1-5-2-7-5-7-4 0-7 4-7 8s3 6 9 4" fill="none" stroke="#9c9c9c" strokeWidth="2" />
      <path d="M28 40c0-6 2-11 5-12h3c2 3 4 8 4 12M31 36h8" fill="none" stroke="#9c9c9c" strokeWidth="2.500" />
    </svg>
    <span className="text-[15px] font-bold leading-[18px] [text-shadow:0_0_2px_#fff,0_0_2px_#ddd]">电气CAD论坛</span>
  </div>
);

const ChatMark = () => (
  <div className="pointer-events-none absolute bottom-[36px] right-[42px] flex items-center gap-2">
    <svg viewBox="0 0 52 42" className="h-[42px] w-[52px]" aria-hidden="true" stroke="#8d8d92" strokeWidth="1">
      <path d="M20 2C9 2 1 9 1 17c0 5 3 9 7 12l-2 6 7-4c3 1 8 1 11 1L38 15C37 8 29 2 20 2z" fill="#fff" />
      <path d="M35 13c-9 0-16 6-16 13s7 13 16 13c2 0 4 0 6-1l5 3-1-5c4-2 6-6 6-10 0-7-7-13-16-13z" fill="#fff" />
      <path d="M10 11c1-2 4-2 5 0M24 11c1-2 4-2 5 0M27 23c1-2 4-2 5 0M38 23c1-2 4-2 5 0" fill="none" />
    </svg>
    <span className="text-[30px] leading-10 text-white [text-shadow:1px_1px_1px_#77777c,0_0_1px_#77777c]">电气CAD论坛</span>
  </div>
);

export default function App() {
  return (
    <div className={`relative flex h-screen flex-col overflow-hidden border-l border-t-2 border-[#16283e] bg-[#86a9c6] text-[12px] leading-4 text-[#d2d2d2] ${UI_FONT}`}>
      <TitleBar />
      <div className="mb-2 ml-[7px] mr-2 flex min-h-0 flex-1 flex-col bg-[#2a2a2b] outline outline-[#3a5068]">
        <MenuBar />
        <ToolBar />
        <div className="grid min-h-0 flex-1 grid-cols-[239px_minmax(0,552fr)_minmax(0,453fr)] grid-rows-[minmax(0,1fr)] gap-[5px] bg-[#121213]">
          <TreePanel />
          <FilePanel />
          <PreviewPanel />
        </div>
      </div>
      <LogoMark />
      <ChatMark />
    </div>
  );
}
